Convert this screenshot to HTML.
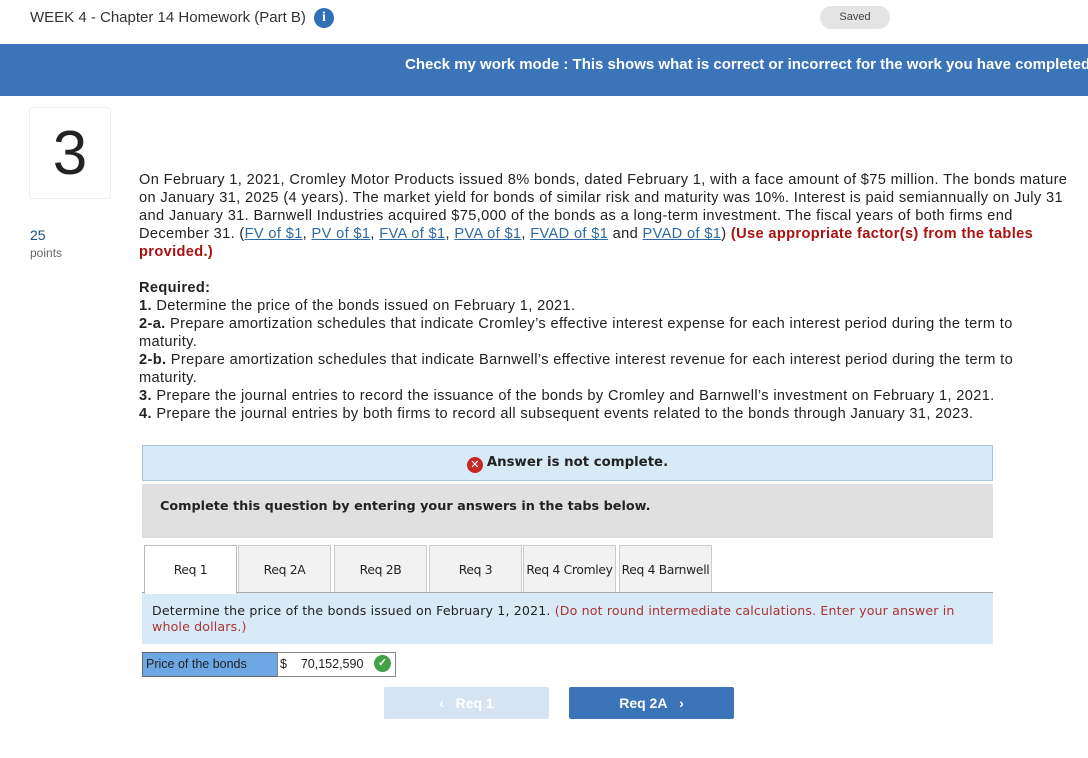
<!DOCTYPE html>
<html><head><meta charset="utf-8"><style>
*{margin:0;padding:0;box-sizing:border-box}
body{width:1088px;height:758px;overflow:hidden;background:#fff;font-family:"Liberation Sans",Arial,sans-serif;color:#222;position:relative}
.abs{position:absolute}
.hdr{left:30px;top:9px;font-size:15px;color:#333}
.info{left:314px;top:8px;width:20px;height:20px;border-radius:50%;background:#2f70b8;color:#fff;font:bold 14px "Liberation Serif",serif;text-align:center;line-height:20px}
.saved{left:820px;top:6px;width:70px;height:23px;border-radius:12px;background:#e4e4e4;font-size:11px;color:#444;text-align:center;line-height:23px}
.bar{left:0;top:44px;width:1088px;height:52px;background:#3b74b8;color:#fff;font-weight:bold;font-size:15px;line-height:42px;padding-left:405px;white-space:nowrap;overflow:hidden}
.qbox{left:29px;top:107px;width:82px;height:92px;border:1px solid #eee;border-radius:4px;font-size:62px;text-align:center;line-height:92px;color:#222}
.pts{left:30px;top:227px;font-size:14px;color:#1b4f7a;line-height:17px}
.pts span{font-size:12px;color:#666}
.txt{left:139px;top:171px;width:932px;font-size:14.6px;line-height:18px;color:#222;letter-spacing:0.36px}
.txt a{color:#2e6aa3;text-decoration:underline}
.red{color:#a11;font-weight:bold}
.dv{font-family:"DejaVu Sans",Verdana,sans-serif}
.ans{left:142px;top:445px;width:851px;height:36px;background:#d9eaf7;border:1px solid #a9c5dd;text-align:center;font-weight:bold;font-size:13.3px;line-height:34px;color:#222}
.xi{display:inline-block;width:16px;height:16px;border-radius:50%;background:#c62828;color:#fff;font-size:11px;line-height:16px;vertical-align:-2px;margin-right:4px}
.cmp{left:142px;top:484px;width:851px;height:54px;background:#e0e0e0;font-weight:bold;font-size:12.8px;line-height:46px;padding-left:18px}
.tab{top:545px;height:48px;width:93px;border:1px solid #ccc;background:#f2f2f2;font-size:12.3px;text-align:center;line-height:48px;white-space:nowrap;letter-spacing:-0.3px}
.tab.on{background:#fff;border-color:#bbb;border-bottom:none;height:49px;z-index:2}
.det{left:142px;top:592px;width:851px;height:52px;background:#d9eaf7;border-top:1px solid #aaa;font-size:12.6px;line-height:16px;padding:10px 10px;letter-spacing:0.15px}
.det span{color:#a33}
.lbl{left:142px;top:652px;width:136px;height:25px;background:#6ea8e4;border:1px solid #666;font-size:12.5px;line-height:23px;padding-left:3px;color:#222}
.val{left:277px;top:652px;width:119px;height:25px;border:1px solid #888;font-size:12.5px;line-height:23px;padding-left:2px}
.ok{left:374px;top:655px;width:17px;height:17px;border-radius:50%;background:#43a047;color:#fff;font-size:11px;text-align:center;line-height:17px;font-weight:bold}
.b1{left:384px;top:687px;width:165px;height:32px;background:#d6e3f2;color:#fff;font-weight:bold;font-size:14px;text-align:center;line-height:32px;border-radius:2px}
.b2{left:569px;top:687px;width:165px;height:32px;background:#3b74b8;color:#fff;font-weight:bold;font-size:14px;text-align:center;line-height:32px;border-radius:2px}
</style></head><body>
<div class="abs hdr">WEEK 4 - Chapter 14 Homework (Part B)</div>
<div class="abs info">i</div>
<div class="abs saved">Saved</div>
<div class="abs bar">Check my work mode : This shows what is correct or incorrect for the work you have completed so far.</div>
<div class="abs qbox">3</div>
<div class="abs pts">25<br><span>points</span></div>
<div class="abs txt">On February 1, 2021, Cromley Motor Products issued 8% bonds, dated February 1, with a face amount of $75 million. The bonds mature on January 31, 2025 (4 years). The market yield for bonds of similar risk and maturity was 10%. Interest is paid semiannually on July 31 and January 31. Barnwell Industries acquired $75,000 of the bonds as a long-term investment. The fiscal years of both firms end December 31. (<a>FV of $1</a>, <a>PV of $1</a>, <a>FVA of $1</a>, <a>PVA of $1</a>, <a>FVAD of $1</a> and <a>PVAD of $1</a>) <span class="red">(Use appropriate factor(s) from the tables provided.)</span><br><br>
<b>Required:</b><br>
<b>1.</b> Determine the price of the bonds issued on February 1, 2021.<br>
<b>2-a.</b> Prepare amortization schedules that indicate Cromley’s effective interest expense for each interest period during the term to maturity.<br>
<b>2-b.</b> Prepare amortization schedules that indicate Barnwell’s effective interest revenue for each interest period during the term to maturity.<br>
<b>3.</b> Prepare the journal entries to record the issuance of the bonds by Cromley and Barnwell’s investment on February 1, 2021.<br>
<b>4.</b> Prepare the journal entries by both firms to record all subsequent events related to the bonds through January 31, 2023.</div>
<div class="abs ans dv"><span class="xi">✕</span>Answer is not complete.</div>
<div class="abs cmp dv">Complete this question by entering your answers in the tabs below.</div>
<div class="abs tab on dv" style="left:144px">Req 1</div>
<div class="abs tab dv" style="left:238px">Req 2A</div>
<div class="abs tab dv" style="left:334px">Req 2B</div>
<div class="abs tab dv" style="left:429px">Req 3</div>
<div class="abs tab dv" style="left:523px">Req 4 Cromley</div>
<div class="abs tab dv" style="left:619px">Req 4 Barnwell</div>
<div class="abs det dv">Determine the price of the bonds issued on February 1, 2021. <span>(Do not round intermediate calculations. Enter your answer in whole dollars.)</span></div>
<div class="abs lbl">Price of the bonds</div>
<div class="abs val">$&nbsp;&nbsp;&nbsp;&nbsp;70,152,590</div>
<div class="abs ok">✓</div>
<div class="abs b1">‹&nbsp;&nbsp;&nbsp;Req 1</div>
<div class="abs b2">Req 2A&nbsp;&nbsp;&nbsp;›</div>
</body></html>
